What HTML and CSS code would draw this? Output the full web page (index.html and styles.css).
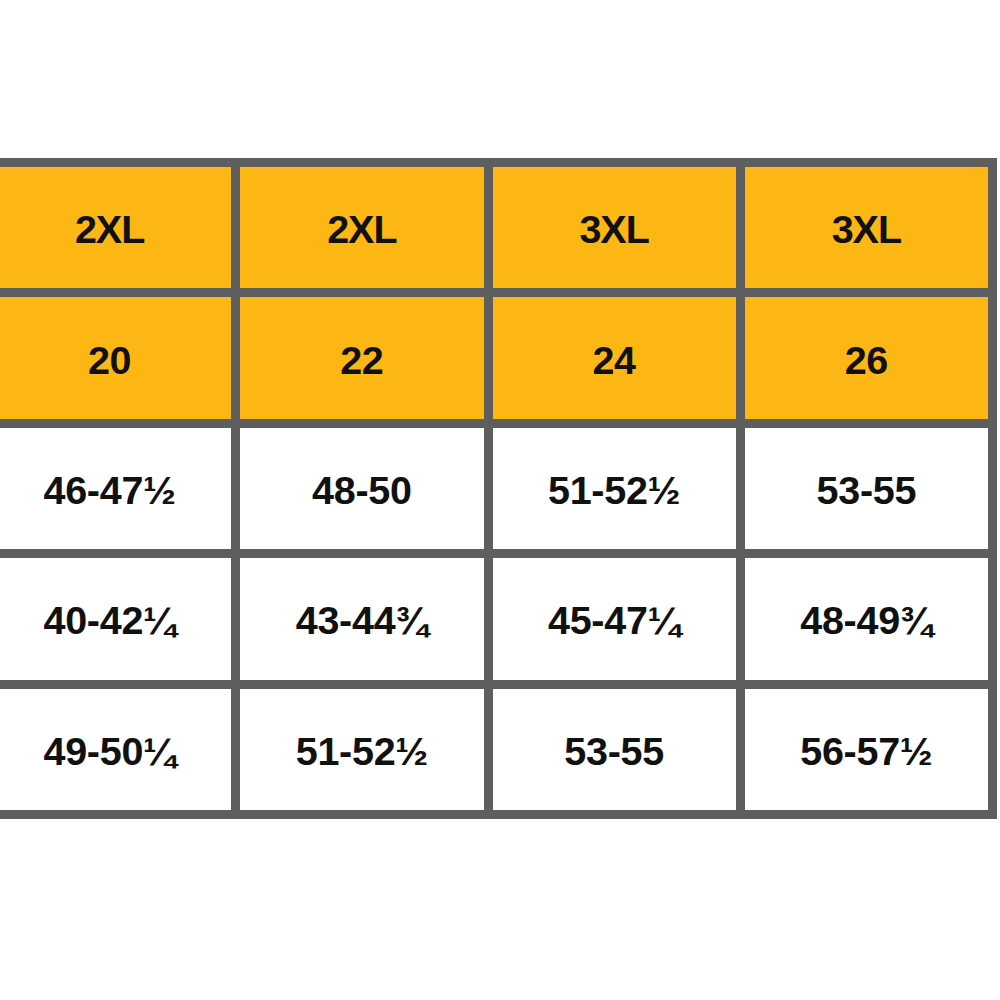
FILE: index.html
```html
<!DOCTYPE html>
<html>
<head>
<meta charset="utf-8">
<link rel="stylesheet" href="styles.css">
</head>
<body>
<div class="page">
  <div class="chart">
    <div class="cell head size">2XL</div>
    <div class="cell head size">2XL</div>
    <div class="cell head size">3XL</div>
    <div class="cell head size">3XL</div>
    <div class="cell head">20</div>
    <div class="cell head">22</div>
    <div class="cell head">24</div>
    <div class="cell head">26</div>
    <div class="cell">46-47½</div>
    <div class="cell">48-50</div>
    <div class="cell">51-52½</div>
    <div class="cell">53-55</div>
    <div class="cell">40-42¼</div>
    <div class="cell">43-44¾</div>
    <div class="cell">45-47¼</div>
    <div class="cell">48-49¾</div>
    <div class="cell">49-50¼</div>
    <div class="cell">51-52½</div>
    <div class="cell">53-55</div>
    <div class="cell">56-57½</div>
  </div>
</div>
</body>
</html>
```
FILE: styles.css
```css
html, body {
  margin: 0;
  padding: 0;
  background: #ffffff;
  overflow: hidden;
}
.page {
  width: 1000px;
  height: 1000px;
  padding-top: 158px;
  box-sizing: border-box;
}
.chart {
  margin-left: -21px;
  width: 1018px;
  box-sizing: border-box;
  display: grid;
  grid-template-columns: repeat(4, 1fr);
  grid-auto-rows: 121.4px;
  gap: 9px;
  padding: 9px;
  background: #5e5e5e;
}
.cell {
  background: #ffffff;
  display: flex;
  align-items: center;
  justify-content: center;
  font-family: "Liberation Sans", Arial, sans-serif;
  font-weight: bold;
  font-size: 39.5px;
  letter-spacing: -0.3px;
  color: #111111;
  padding-top: 4px;
  box-sizing: border-box;
}
.size {
  letter-spacing: -1px;
}
.head {
  background: #fcb715;
}
```
